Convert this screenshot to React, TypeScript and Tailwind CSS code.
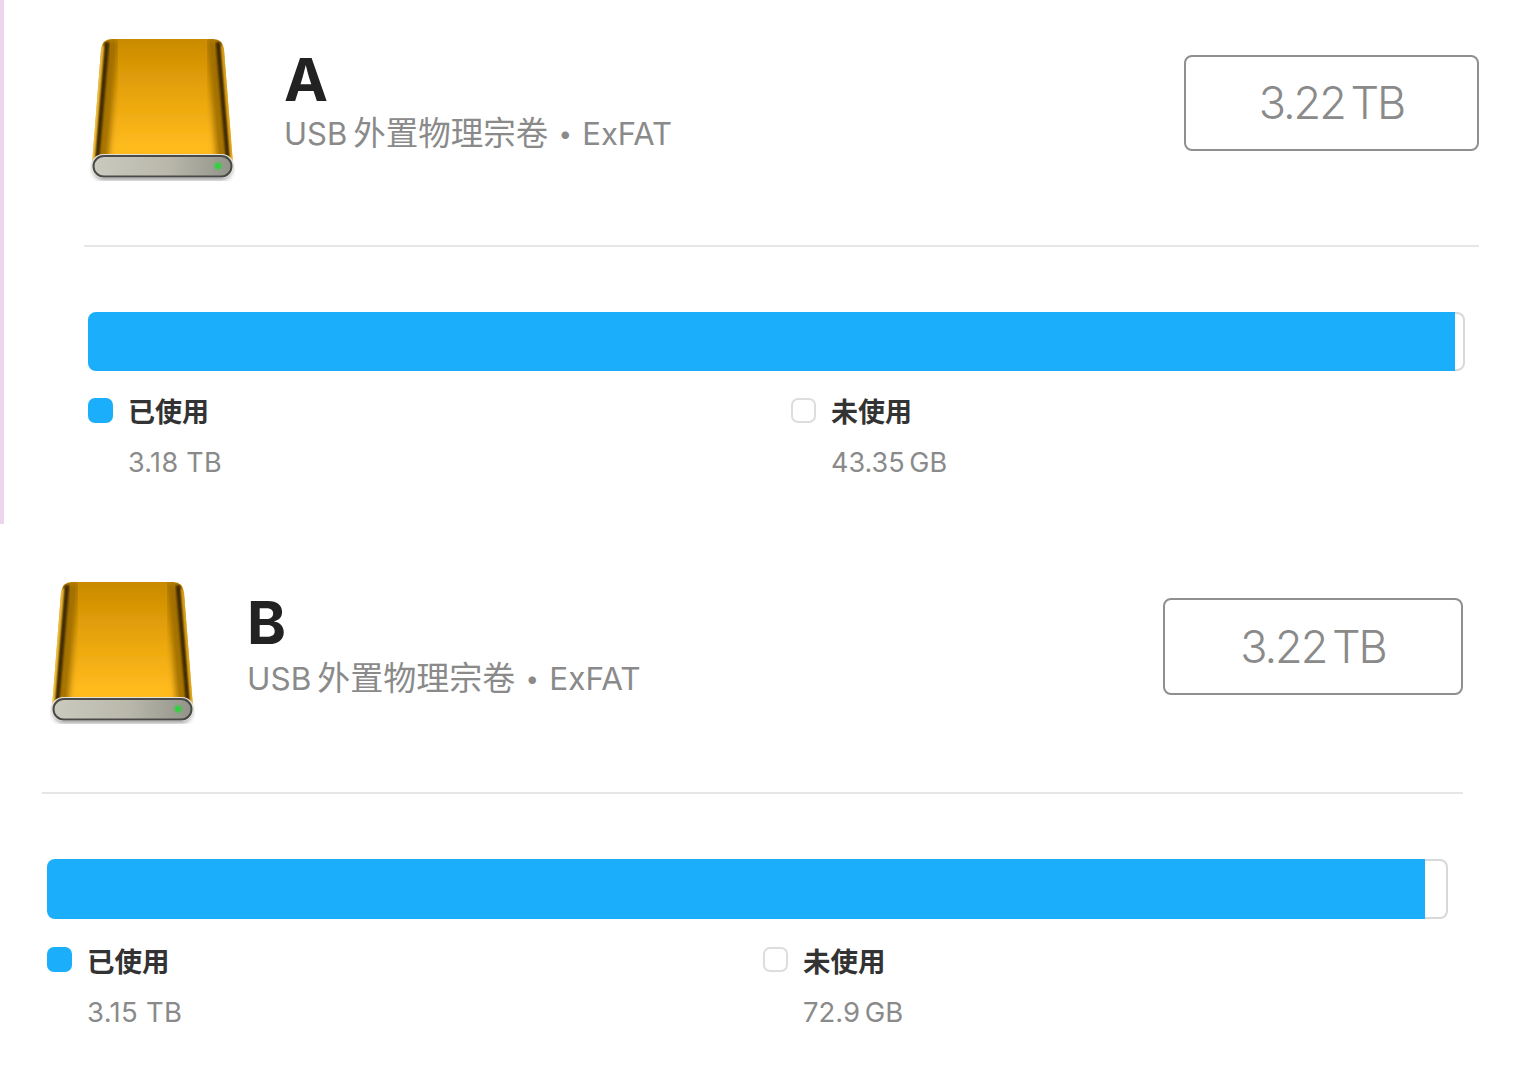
import React from 'react';

interface DiskProps {
  id: string;
  name: string;
  total: string;
  used: string;
  free: string;
  usedPercent: number;
  panelClass: string;
  headerClass: string;
  iconClass: string;
  textClass: string;
  subClass: string;
  cjkClass: string;
  boxClass: string;
  barClass: string;
  legendClass: string;
  legendColClass: string;
  labelClass: string;
  valueClass: string;
}

function DriveIcon({ id, className }: { id: string; className: string }) {
  const body = 'M22 3 H123 Q133 3 134 14 L143 128 H2 L11 14 Q12 3 22 3 Z';
  return (
    <svg viewBox="0 0 145 145" className={className}>
      <defs>
        <linearGradient id={`${id}-body`} x1="0" y1="0" x2="0" y2="1">
          <stop offset="0" stopColor="#c98a04" />
          <stop offset="0.4" stopColor="#e6a208" />
          <stop offset="0.85" stopColor="#ffba1e" />
        </linearGradient>
        <linearGradient id={`${id}-slot`} x1="0" y1="0" x2="1" y2="0">
          <stop offset="0" stopColor="#cbcabf" />
          <stop offset="0.55" stopColor="#b8b7aa" />
          <stop offset="1" stopColor="#93938a" />
        </linearGradient>
        <clipPath id={`${id}-clip`}>
          <path d={body} />
        </clipPath>
        <filter id={`${id}-shadow`} x="-10%" y="-40%" width="120%" height="180%">
          <feGaussianBlur stdDeviation="2.5" />
        </filter>
        <filter id={`${id}-soft`} x="-30%" y="-10%" width="160%" height="120%">
          <feGaussianBlur stdDeviation="1.2" />
        </filter>
        <filter id={`${id}-softer`} x="-50%" y="-10%" width="200%" height="120%">
          <feGaussianBlur stdDeviation="3" />
        </filter>
        <filter id={`${id}-all`} x="-5%" y="-5%" width="110%" height="110%">
          <feGaussianBlur stdDeviation="0.5" />
        </filter>
      </defs>
      <rect x="3" y="122" width="139" height="22" rx="11" fill="#000" opacity="0.4" filter={`url(#${id}-shadow)`} />
      <g filter={`url(#${id}-all)`}>
        <path d={body} fill={`url(#${id}-body)`} />
        <g clipPath={`url(#${id}-clip)`}>
          <path d="M23 3 L13 125" stroke="#9c6c04" strokeWidth="10" filter={`url(#${id}-softer)`} />
          <path d="M122 3 L132 125" stroke="#9c6c04" strokeWidth="10" filter={`url(#${id}-softer)`} />
          <path d="M17 6 L7 125" stroke="#3f2c03" strokeWidth="5" filter={`url(#${id}-soft)`} />
          <path d="M128 6 L138 125" stroke="#3f2c03" strokeWidth="5" filter={`url(#${id}-soft)`} />
          <path d="M12 10 L2 125" stroke="#ecc04a" strokeWidth="3.5" filter={`url(#${id}-soft)`} />
          <path d="M133 10 L143 125" stroke="#d9a21e" strokeWidth="3.5" filter={`url(#${id}-soft)`} />
        </g>
        <rect x="1" y="118" width="143" height="24" rx="12" fill="#e4e2d8" />
        <rect x="3.5" y="120" width="138" height="20.5" rx="10.2" fill={`url(#${id}-slot)`} stroke="#4a4a48" strokeWidth="2" />
        <circle cx="128" cy="130" r="5" fill="#2fd43c" opacity="0.3" />
        <circle cx="128" cy="130" r="2.8" fill="#2fd43c" />
      </g>
    </svg>
  );
}

function DiskPanel(props: DiskProps) {
  return (
    <section className={props.panelClass}>
      <div className={props.headerClass}>
        <DriveIcon id={props.id} className={props.iconClass} />
        <div className={props.textClass}>
          <h2 className="text-[59px] leading-[60px] font-bold text-[#222222]">{props.name}</h2>
          <p className={props.subClass}>
            <span>USB</span>
            <span className={props.cjkClass}>外置物理宗卷</span>
            <span className="w-[34px] self-center text-center text-[24px]">•</span>
            <span>ExFAT</span>
          </p>
        </div>
        <div className={props.boxClass}>{props.total}</div>
      </div>
      <div className="h-[2px] bg-[#e6e6e6]" />
      <div className={props.barClass}>
        <div className="h-full bg-[#1aaefb] rounded-l-[8px]" style={{ width: `${props.usedPercent}%` }} />
        <div className="flex-1 rounded-r-[8px] border-y-2 border-r-2 border-[#d8d8d8]" />
      </div>
      <div className={props.legendClass}>
        <div className={props.legendColClass}>
          <div className="flex items-start">
            <span className="w-[25px] h-[25px] rounded-[7px] bg-[#1aaefb]" />
            <span className={props.labelClass}>已使用</span>
          </div>
          <p className={`${props.valueClass} tracking-[0.3px]`}>{props.used}</p>
        </div>
        <div>
          <div className="flex items-start">
            <span className="w-[25px] h-[25px] rounded-[7px] border-2 border-[#dddddd] bg-white" />
            <span className={props.labelClass}>未使用</span>
          </div>
          <p className={`${props.valueClass} [word-spacing:-3px]`}>{props.free}</p>
        </div>
      </div>
    </section>
  );
}

export default function App() {
  return (
    <div className="w-[1528px] h-[1080px] bg-white overflow-hidden font-['Inter','Noto_Sans_CJK_SC',sans-serif]">
      <DiskPanel
        id="a"
        name="A"
        total="3.22 TB"
        used="3.18 TB"
        free="43.35 GB"
        usedPercent={99.3}
        panelClass="h-[524px] border-l-4 border-[#eed5ee] pl-[80px] pr-[49px] pt-[36px]"
        headerClass="h-[209px] flex items-start"
        iconClass="w-[145px] h-[145px] ml-[6px] shrink-0"
        textClass="ml-[49px] mt-[14px] flex-1"
        subClass="mt-[4px] flex items-baseline text-[31px] leading-[40px] text-[#8a8a8a]"
        cjkClass="ml-[6px] text-[32.5px]"
        boxClass="mt-[19px] w-[295px] h-[96px] rounded-[8px] border-2 border-[#8f8f8f] flex items-center justify-center text-[45px] tracking-[-2px] [word-spacing:-5px] text-[#8a8a8a] font-light"
        barClass="ml-[4px] mr-[14px] mt-[65px] h-[59px] flex"
        legendClass="ml-[4px] mt-[27px] flex"
        legendColClass="w-[703px]"
        labelClass="ml-[15px] text-[27px] leading-[30px] font-semibold text-[#333333]"
        valueClass="ml-[40px] mt-[19px] text-[27px] leading-[32px] text-[#8a8a8a]"
      />
      <DiskPanel
        id="b"
        name="B"
        total="3.22 TB"
        used="3.15 TB"
        free="72.9 GB"
        usedPercent={98.36}
        panelClass="h-[556px] pl-[42px] pr-[65px] pt-[55px]"
        headerClass="h-[213px] flex items-start"
        iconClass="w-[145px] h-[145px] ml-[8px] shrink-0"
        textClass="ml-[52px] mt-[14px] flex-1"
        subClass="mt-[5px] flex items-baseline text-[31.5px] leading-[40px] text-[#8a8a8a]"
        cjkClass="ml-[6px] text-[33px]"
        boxClass="mt-[19px] w-[300px] h-[97px] rounded-[8px] border-2 border-[#8f8f8f] flex items-center justify-center text-[45px] tracking-[-2px] [word-spacing:-5px] text-[#8a8a8a] font-light"
        barClass="ml-[5px] mr-[15px] mt-[65px] h-[60px] flex"
        legendClass="ml-[5px] mt-[28px] flex"
        legendColClass="w-[716px]"
        labelClass="ml-[15px] text-[27.5px] leading-[30px] font-semibold text-[#333333]"
        valueClass="ml-[40px] mt-[19px] text-[27.5px] leading-[32px] text-[#8a8a8a]"
      />
    </div>
  );
}
